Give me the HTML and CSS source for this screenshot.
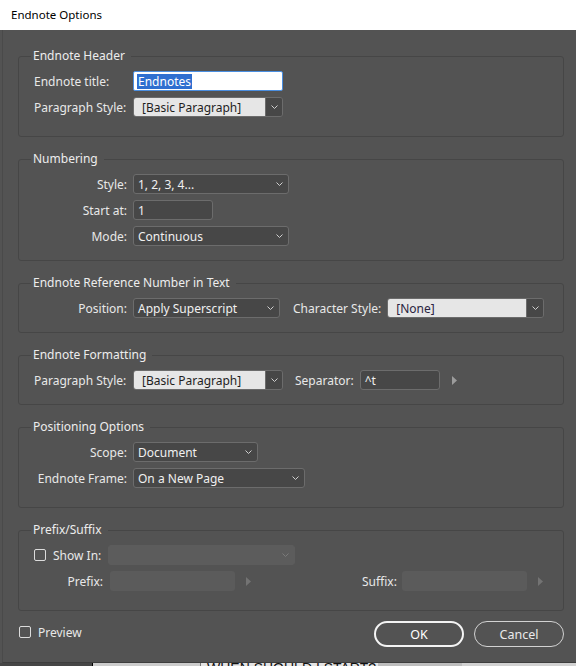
FILE: index.html
```html
<!DOCTYPE html>
<html>
<head>
<meta charset="utf-8">
<title>Endnote Options</title>
<link rel="stylesheet" href="styles.css">
</head>
<body>
<div class="window">
  <div class="titlebar">Endnote Options</div>
  <div class="dialog">
    <fieldset class="group tall">
      <legend>Endnote Header</legend>
      <div class="rows">
        <div class="row">
          <span class="label left">Endnote title:</span>
          <div class="textbox focus w150"><span class="sel">Endnotes</span></div>
        </div>
        <div class="row">
          <span class="label left">Paragraph Style:</span>
          <div class="combo w150"><span class="combo-text">[Basic Paragraph]</span><span class="combo-btn"><svg width="7" height="4" viewBox="0 0 7 4"><polyline points="0.5,0.5 3.5,3.5 6.5,0.5" fill="none" stroke="#cfcfcf" stroke-width="1"/></svg></span></div>
        </div>
      </div>
    </fieldset>

    <fieldset class="group">
      <legend>Numbering</legend>
      <div class="rows">
        <div class="row">
          <span class="label">Style:</span>
          <div class="dropdown w156"><span>1, 2, 3, 4...</span><svg width="7" height="4" viewBox="0 0 7 4"><polyline points="0.5,0.5 3.5,3.5 6.5,0.5" fill="none" stroke="#cfcfcf" stroke-width="1"/></svg></div>
        </div>
        <div class="row">
          <span class="label">Start at:</span>
          <div class="textbox dark w80">1</div>
        </div>
        <div class="row">
          <span class="label">Mode:</span>
          <div class="dropdown w156"><span>Continuous</span><svg width="7" height="4" viewBox="0 0 7 4"><polyline points="0.5,0.5 3.5,3.5 6.5,0.5" fill="none" stroke="#cfcfcf" stroke-width="1"/></svg></div>
        </div>
      </div>
    </fieldset>

    <fieldset class="group">
      <legend>Endnote Reference Number in Text</legend>
      <div class="rows">
        <div class="row">
          <span class="label">Position:</span>
          <div class="dropdown w147"><span>Apply Superscript</span><svg width="7" height="4" viewBox="0 0 7 4"><polyline points="0.5,0.5 3.5,3.5 6.5,0.5" fill="none" stroke="#cfcfcf" stroke-width="1"/></svg></div>
          <span class="label2 ml13">Character Style:</span>
          <div class="combo w157"><span class="combo-text none">[None]</span><span class="combo-btn"><svg width="7" height="4" viewBox="0 0 7 4"><polyline points="0.5,0.5 3.5,3.5 6.5,0.5" fill="none" stroke="#cfcfcf" stroke-width="1"/></svg></span></div>
        </div>
      </div>
    </fieldset>

    <fieldset class="group">
      <legend>Endnote Formatting</legend>
      <div class="rows">
        <div class="row">
          <span class="label left">Paragraph Style:</span>
          <div class="combo w150"><span class="combo-text">[Basic Paragraph]</span><span class="combo-btn"><svg width="7" height="4" viewBox="0 0 7 4"><polyline points="0.5,0.5 3.5,3.5 6.5,0.5" fill="none" stroke="#cfcfcf" stroke-width="1"/></svg></span></div>
          <span class="label2 ml12">Separator:</span>
          <div class="textbox dark w80">^t</div>
          <svg class="tri ml12" width="5" height="9" viewBox="0 0 5 9"><polygon points="0,0 5,4.5 0,9" fill="#9c9c9c"/></svg>
        </div>
      </div>
    </fieldset>

    <fieldset class="group tall">
      <legend>Positioning Options</legend>
      <div class="rows">
        <div class="row">
          <span class="label">Scope:</span>
          <div class="dropdown w125"><span>Document</span><svg width="7" height="4" viewBox="0 0 7 4"><polyline points="0.5,0.5 3.5,3.5 6.5,0.5" fill="none" stroke="#cfcfcf" stroke-width="1"/></svg></div>
        </div>
        <div class="row">
          <span class="label">Endnote Frame:</span>
          <div class="dropdown w172"><span>On a New Page</span><svg width="7" height="4" viewBox="0 0 7 4"><polyline points="0.5,0.5 3.5,3.5 6.5,0.5" fill="none" stroke="#cfcfcf" stroke-width="1"/></svg></div>
        </div>
      </div>
    </fieldset>

    <fieldset class="group tall">
      <legend>Prefix/Suffix</legend>
      <div class="rows">
        <div class="row">
          <span class="check"></span>
          <span class="label2 ml7">Show In:</span>
          <div class="dropdown disabled w187"><span></span><svg width="7" height="4" viewBox="0 0 7 4"><polyline points="0.5,0.5 3.5,3.5 6.5,0.5" fill="none" stroke="#7a7a7a" stroke-width="1"/></svg></div>
        </div>
        <div class="row">
          <span class="label narrow">Prefix:</span>
          <div class="textbox disabled w125"></div>
          <svg class="tri ml11" width="5" height="9" viewBox="0 0 5 9"><polygon points="0,0 5,4.5 0,9" fill="#737373"/></svg>
          <span class="label2 suffix">Suffix:</span>
          <div class="textbox disabled w125"></div>
          <svg class="tri ml11" width="5" height="9" viewBox="0 0 5 9"><polygon points="0,0 5,4.5 0,9" fill="#737373"/></svg>
        </div>
      </div>
    </fieldset>

    <div class="footer">
      <label class="preview"><span class="check"></span><span class="preview-text">Preview</span></label>
      <div class="buttons">
        <button class="btn primary">OK</button>
        <button class="btn">Cancel</button>
      </div>
    </div>
  </div>
  <div class="backdrop">
    <span class="seg seg-a"></span>
    <span class="seg seg-b"></span>
    <span class="seg seg-c"></span>
    <span class="seg seg-d"><span class="bg-text">WHEN SHOULD I START?</span></span>
    <span class="seg seg-e"></span>
    <span class="seg seg-f"></span>
  </div>
</div>
</body>
</html>
```

FILE: styles.css
```css
* { box-sizing: border-box; }
html, body { margin: 0; padding: 0; }
body {
  width: 576px;
  height: 666px;
  overflow: hidden;
  background: #535353;
  font-family: "Noto Sans", "Open Sans", sans-serif;
  font-size: 12px;
  color: #e8e8e8;
}
.window { width: 576px; height: 666px; display: flex; flex-direction: column; }

.titlebar {
  height: 30px;
  flex: none;
  background: #ffffff;
  color: #000000;
  font-size: 11.5px;
  display: flex;
  align-items: center;
  padding-left: 11px;
  padding-bottom: 1px;
}

.dialog {
  height: 633px;
  flex: none;
  margin-left: 2px;
  border-left: 1px solid #4a4a4a;
  border-bottom: 1px solid #3e3e3e;
  padding: 18px 12px 0 15px;
  display: flex;
  flex-direction: column;
  gap: 14px;
  background: #535353;
}

.group {
  margin: 0;
  padding: 0;
  border: 1px solid #464646;
  border-radius: 3px;
  min-width: 0;
}
.group legend {
  margin-left: 12px;
  padding: 0 6px 0 2px;
  line-height: 16px;
  color: #ededed;
}
.rows {
  display: flex;
  flex-direction: column;
  gap: 6px;
  padding: 7px 0 14px 15px;
}
.group.tall .rows { padding-bottom: 19px; }

.row {
  display: flex;
  align-items: center;
  height: 20px;
}
.label {
  width: 93px;
  margin-right: 6px;
  text-align: right;
  white-space: nowrap;
  flex: none;
}
.label.left { text-align: left; }
.label.narrow { width: 69px; margin-right: 7px; }
.label2 { margin-right: 6px; white-space: nowrap; flex: none; }
.ml7 { margin-left: 7px; margin-right: 7px; }
.ml11 { margin-left: 11px; }
.ml12 { margin-left: 12px; }
.ml13 { margin-left: 13px; }
.suffix { margin-left: 111px; margin-right: 5px; }

.w80 { width: 80px; }
.w125 { width: 125px; }
.w147 { width: 147px; }
.w150 { width: 150px; }
.w156 { width: 156px; }
.w157 { width: 157px; }
.w172 { width: 172px; }
.w187 { width: 187px; }

.textbox {
  height: 20px;
  flex: none;
  display: flex;
  align-items: center;
  padding-left: 4px;
  border-radius: 3px;
  white-space: nowrap;
}
.textbox.focus {
  background: #ffffff;
  border: 1px solid #4a8ee0;
  border-radius: 2px;
  padding-left: 3px;
}
.textbox .sel {
  background: #2f6fd0;
  color: #ffffff;
  line-height: 15px;
  padding: 0 1px;
}
.textbox.dark {
  background: #474747;
  border: 1px solid #6c6c6c;
  color: #f0f0f0;
}
.textbox.disabled {
  background: #5b5b5b;
}

.dropdown {
  height: 20px;
  flex: none;
  display: flex;
  align-items: center;
  justify-content: space-between;
  padding: 0 5px 0 4px;
  background: #474747;
  border: 1px solid #6c6c6c;
  border-radius: 3px;
  color: #f0f0f0;
  white-space: nowrap;
}
.dropdown.disabled {
  background: #5c5c5c;
  border-color: #5c5c5c;
}

.combo {
  height: 20px;
  flex: none;
  display: flex;
  border: 1px solid #6c6c6c;
  border-radius: 3px;
  overflow: hidden;
}
.combo-text {
  flex: 1;
  background: #e6e6e6;
  color: #1f1f1f;
  padding-left: 8px;
  display: flex;
  align-items: center;
  white-space: nowrap;
}
.combo-text.none { color: #2a2440; }
.combo-btn {
  width: 17px;
  flex: none;
  background: #474747;
  border-left: 1px solid #6c6c6c;
  display: flex;
  align-items: center;
  justify-content: center;
}

.tri { flex: none; display: block; }

.check {
  width: 12px;
  height: 12px;
  flex: none;
  border: 1px solid #dcdcdc;
  border-radius: 2px;
  display: block;
}

.footer {
  margin-top: -4px;
  display: flex;
  justify-content: space-between;
  align-items: flex-start;
  padding-left: 1px;
}
.preview {
  display: flex;
  align-items: center;
  gap: 7px;
  margin-top: 3px;
  height: 16px;
}
.preview-text { color: #e8e8e8; }
.buttons { display: flex; gap: 10px; }
.btn {
  width: 90px;
  height: 26px;
  border-radius: 13px;
  border: 1px solid #d2d2d2;
  background: transparent;
  color: #eaeaea;
  font-family: "Noto Sans", "Open Sans", sans-serif;
  font-size: 12.5px;
  padding: 0;
  margin: 0;
}
.btn.primary {
  border: 2px solid #f4f4f4;
  color: #ffffff;
}

.backdrop {
  flex: 1;
  display: flex;
  overflow: hidden;
}
.seg { display: block; height: 100%; flex: none; }
.seg-a { width: 92px; background: #464646; }
.seg-b { width: 1px; background: #000000; }
.seg-c { width: 107px; background: #cccccc; }
.seg-d { width: 178px; background: #e4e4e4; border-left: 1px solid #777777; overflow: hidden; }
.seg-e { width: 84px; background: #bebebe; }
.seg-f { flex: 1; background: #d2d2d2; }
.bg-text {
  display: block;
  margin-top: -2px;
  padding-left: 6px;
  font-family: "Liberation Sans", sans-serif;
  font-size: 14px;
  line-height: 14px;
  color: #111111;
  white-space: nowrap;
}
```
